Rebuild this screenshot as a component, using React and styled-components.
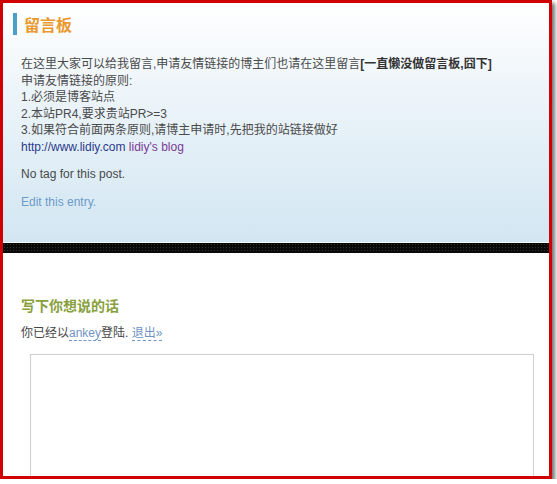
import React from "react";
import { styled, createGlobalStyle } from "styled-components";

const Global = createGlobalStyle`
  html, body {
    margin: 0;
    padding: 0;
    background: #ffffff;
  }
  body {
    font-family: "Liberation Sans", "Noto Sans CJK SC", sans-serif;
  }
`;

const Frame = styled.div`
  width: 552px;
  height: 479px;
  box-sizing: border-box;
  border: 3px solid #d00000;
  box-shadow: 3px 3px 4px rgba(0, 0, 0, 0.55);
  overflow: hidden;
  display: flex;
  flex-direction: column;
  background: #ffffff;
`;

const Post = styled.div`
  padding: 10px 10px 32px 10px;
  background: linear-gradient(to bottom, #ffffff 0%, #eef5fa 35%, #d2e6f2 100%);
`;

const Title = styled.h2`
  margin: 0;
  height: 22px;
  line-height: 22px;
  border-left: 4px solid #4aa0c8;
  padding-left: 7px;
  font-size: 16px;
  font-weight: bold;
  color: #e9992e;
  font-family: "Noto Sans CJK SC", sans-serif;
`;

const Body = styled.div`
  margin: 21px 0 0 8px;
  font-size: 12px;
  line-height: 16.5px;
  color: #4a4a4a;
`;

const Para = styled.p`
  margin: ${(p) => p.$mt || 0}px 0 0 0;
  color: ${(p) => p.$color || "inherit"};
`;

const Strong = styled.b`
  color: #333;
`;

const Link = styled.a`
  color: ${(p) => p.$color};
  text-decoration: none;
`;

const Band = styled.div`
  height: 10px;
  background-color: #0a0a0a;
  background-image: radial-gradient(#2e2e2e 0.6px, transparent 0.8px);
  background-size: 3px 3px;
  border-top: 1px solid #f4f8fb;
`;

const Comments = styled.div`
  flex: 1;
  padding: 42px 15px 0 18px;
  display: flex;
  flex-direction: column;
`;

const ReplyTitle = styled.h3`
  margin: 0;
  font-size: 14px;
  line-height: 20px;
  font-weight: bold;
  color: #88a03c;
  font-family: "Noto Sans CJK SC", sans-serif;
`;

const Logged = styled.p`
  margin: 10px 0 0 0;
  font-size: 12px;
  line-height: 16px;
  color: #444;
`;

const Dashed = styled.a`
  color: #6f93c4;
  text-decoration: none;
  border-bottom: 1px dashed #6f93c4;
`;

const TextArea = styled.div`
  margin: 13px 0 0 9px;
  flex: 1;
  border: 1px solid #cfcfcf;
  border-bottom: none;
  background: #fff;
`;

export default function App() {
  return (
    <>
      <Global />
      <Frame>
        <Post>
          <Title>留言板</Title>
          <Body>
            <Para>
              在这里大家可以给我留言,申请友情链接的博主们也请在这里留言
              <Strong>[一直懒没做留言板,囧下]</Strong>
            </Para>
            <Para>申请友情链接的原则:</Para>
            <Para>1.必须是博客站点</Para>
            <Para>2.本站PR4,要求贵站PR&gt;=3</Para>
            <Para>3.如果符合前面两条原则,请博主申请时,先把我的站链接做好</Para>
            <Para>
              <Link $color="#2b3a8c">http://www.lidiy.com</Link>{" "}
              <Link $color="#7b3a96">lidiy's blog</Link>
            </Para>
            <Para $mt={11}>No tag for this post.</Para>
            <Para $mt={11} $color="#6c9bc9">
              Edit this entry.
            </Para>
          </Body>
        </Post>
        <Band />
        <Comments>
          <ReplyTitle>写下你想说的话</ReplyTitle>
          <Logged>
            你已经以<Dashed>ankey</Dashed>登陆. <Dashed>退出»</Dashed>
          </Logged>
          <TextArea />
        </Comments>
      </Frame>
    </>
  );
}
